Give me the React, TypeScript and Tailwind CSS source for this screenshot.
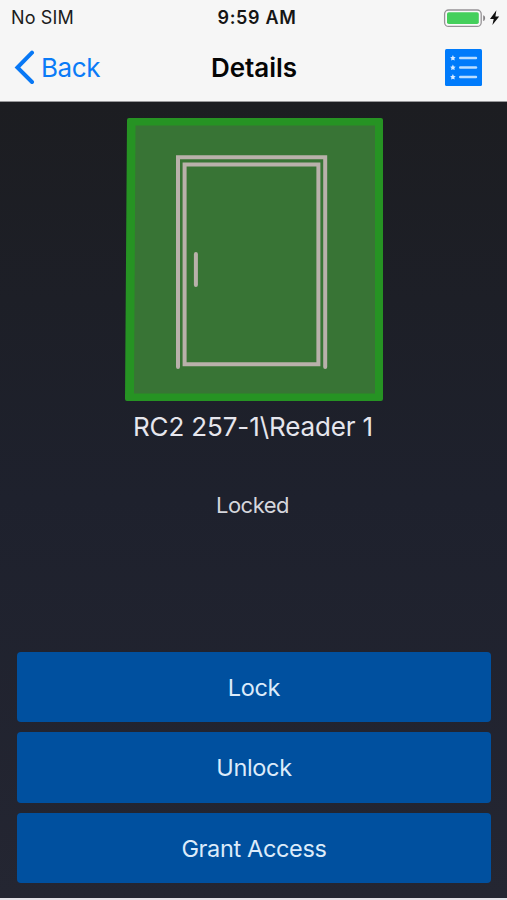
import React from "react";

const actions = ["Lock", "Unlock", "Grant Access"];

function StatusBar() {
  return (
    <div className="grid h-[34px] grid-cols-[1fr_auto_1fr] items-center pr-[7px] pl-[10px] text-[18px] leading-[34px]">
      <span className="pt-px pl-px tracking-[0.15px] whitespace-nowrap text-[#1c1c1c]">No SIM</span>
      <span className="pt-px pl-[4px] text-center font-semibold tracking-[0.65px] whitespace-nowrap text-[#151515]">9:59 AM</span>
      <svg className="justify-self-end" width="58" height="34" viewBox="442 0 58 34">
        <rect x="444.6" y="9" width="36.6" height="16.4" rx="4" fill="#fbf9fb" stroke="#969396" strokeWidth="1.3" />
        <rect x="447" y="11.3" width="31.8" height="11.8" rx="1.8" fill="#45cf5c" />
        <path d="M483.2 14.3c2.6.7 2.6 5.1 0 5.8z" fill="#858285" />
        <path d="M496.4 9.2 490 18h3.7l-1.3 6 6.8-8.6h-3.8z" fill="#111" />
      </svg>
    </div>
  );
}

function StarDot({ y }: { y: number }) {
  return (
    <path
      transform={`translate(7.9 ${y})`}
      d="M0-3 .9-1 2.8-.8 1.4.6 1.8 2.6 0 1.7-1.8 2.6-1.4.6-2.8-.8-.9-1Z"
      fill="#d6eaff"
    />
  );
}

function NavBar() {
  return (
    <div className="grid h-[67px] grid-cols-[1fr_auto_1fr] items-center pr-[25px] pl-[25px]">
      <button className="-ml-[11px] flex items-center text-left text-[#0a7bf7]">
        <svg width="22" height="36" viewBox="0 0 22 36" fill="none" stroke="#0878f5" strokeWidth="4" strokeLinecap="round" strokeLinejoin="miter">
          <path d="M18 2.7 3.4 17.5 18 32" />
        </svg>
        <span className="ml-[5px] text-[26px] leading-8 tracking-[-0.4px]">Back</span>
      </button>
      <h1 className="pl-px text-center text-[26px] leading-8 font-semibold tracking-[-0.05px] text-[#050505]">Details</h1>
      <button className="justify-self-end" aria-label="List">
        <svg className="mb-px block" width="37" height="37" viewBox="0 0 37 37">
          <rect width="37" height="37" rx="1.5" fill="#007bfb" />
          {[9, 18.5, 28].map((y) => (
            <g key={y}>
              <StarDot y={y} />
              <path d={`M15.2 ${y}H31`} stroke="#b9ddff" strokeWidth="2.4" strokeLinecap="round" />
            </g>
          ))}
        </svg>
      </button>
    </div>
  );
}

function DoorPicture() {
  return (
    <svg className="ml-px block" width="258" height="283" viewBox="125 118 258 283">
      <path d="M129 118H381Q383 118 383 120V399Q383 401 381 401H127Q125 401 125 399L127 120Q127 118 129 118Z" fill="#269323" />
      <path d="M135.5 125.5H375V393.5H134Z" fill="#387435" />
      <g fill="none" stroke="#b9b1ab" strokeWidth="4" strokeLinecap="round" strokeLinejoin="miter">
        <path d="M178 367V157.2H325.2V367" />
        <path d="M184.6 164.5H318.4V364.3H184.6Z" />
        <path d="M195.9 254V285" />
      </g>
    </svg>
  );
}

export default function App() {
  return (
    <div className="flex h-[900px] w-[507px] flex-col overflow-hidden bg-[#e3e2e8] font-[Inter,'Liberation_Sans',sans-serif]">
      <header className="h-[102px] shrink-0 border-b border-[#98989a] bg-[#f6f6f6]">
        <StatusBar />
        <NavBar />
      </header>
      <main className="flex h-[796px] shrink-0 flex-col items-center bg-linear-to-b from-[#1c1d21] via-[#1e212d] to-[#242632] px-4 pt-4">
        <DoorPicture />
        <p className="mt-[10px] mr-px text-[26px] leading-8 tracking-[-0.12px] whitespace-nowrap text-[#e6e6ed]">RC2 257-1\Reader 1</p>
        <p className="mt-[50px] mr-[2px] text-[22px] leading-6 tracking-[-0.5px] text-[#d5d6dc]">Locked</p>
        <div className="mt-[135px] flex w-full flex-col gap-[10px] pl-px">
          {actions.map((label) => (
            <button key={label} className="h-[70.3px] rounded-[4px] bg-[#00509f] pt-px text-[23.5px] tracking-[-0.35px] text-[#dcebfa]">
              {label}
            </button>
          ))}
        </div>
      </main>
    </div>
  );
}
